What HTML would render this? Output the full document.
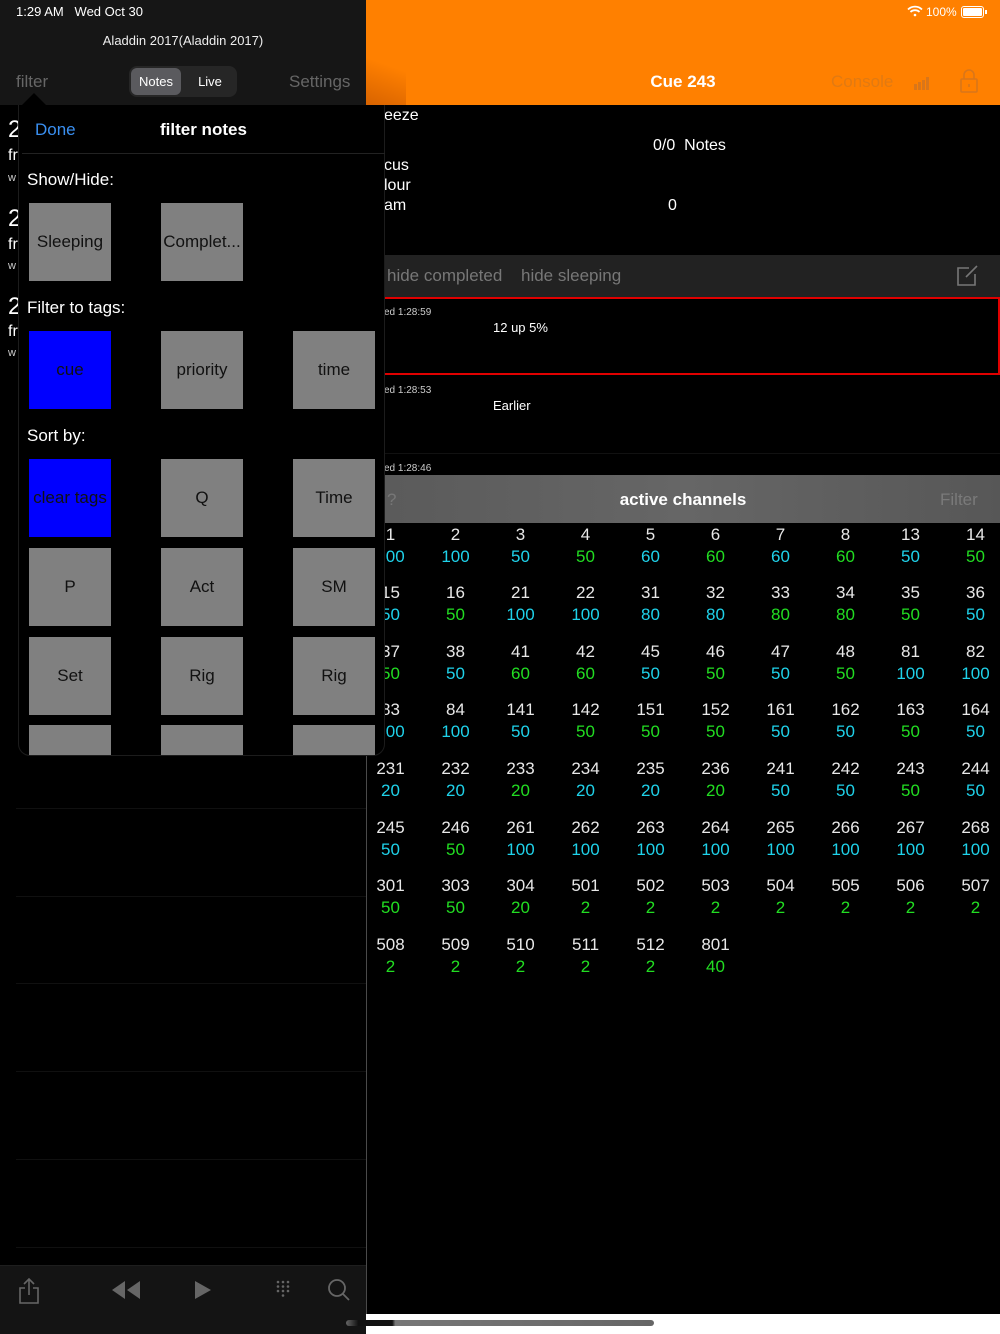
<!DOCTYPE html>
<html><head><meta charset="utf-8"><style>
*{margin:0;padding:0;box-sizing:border-box}
body{width:1000px;height:1334px;background:#000;font-family:"Liberation Sans",sans-serif;position:relative;overflow:hidden;color:#fff}
.a{position:absolute}
.btn{position:absolute;width:82px;height:78px;background:#808080;color:#111;font-size:17px;display:flex;align-items:center;justify-content:center;white-space:nowrap;overflow:hidden}
.blue{background:#0000ff}
.sep{position:absolute;left:16px;width:350px;height:1px;background:#101010}
.row{position:absolute;left:358px;display:flex}
.c{width:65px;text-align:center;font-size:17px;line-height:22px}
.n{color:#e8e8e8}
.cy{color:#1fd2ea}.gr{color:#22dd22}
</style></head><body>
<div class="a" style="left:0;top:0;width:366px;height:105px;background:#161616"></div>
<div class="a" style="left:16px;top:4px;font-size:13px;color:#fff">1:29 AM &nbsp; Wed Oct 30</div>
<div class="a" style="left:0;width:366px;top:33px;text-align:center;font-size:13px;color:#eee">Aladdin 2017(Aladdin 2017)</div>
<div class="a" style="left:16px;top:72px;font-size:17px;color:#666">filter</div>
<div class="a" style="left:129px;top:66px;width:108px;height:31px;background:#262626;border-radius:8px"></div>
<div class="a" style="left:131px;top:68px;width:50px;height:27px;background:#5a5a5e;border-radius:6px"></div>
<div class="a" style="left:131px;top:74px;width:50px;text-align:center;font-size:13px">Notes</div>
<div class="a" style="left:185px;top:74px;width:50px;text-align:center;font-size:13px">Live</div>
<div class="a" style="left:289px;top:72px;font-size:17px;color:#666">Settings</div>
<div class="a" style="left:8px;top:116px;font-size:24px">2</div>
<div class="a" style="left:8px;top:147px;font-size:16px">fr</div>
<div class="a" style="left:8px;top:172px;font-size:11px;color:#ccc">w</div>
<div class="a" style="left:8px;top:205px;font-size:24px">2</div>
<div class="a" style="left:8px;top:236px;font-size:16px">fr</div>
<div class="a" style="left:8px;top:260px;font-size:11px;color:#ccc">w</div>
<div class="a" style="left:8px;top:293px;font-size:24px">2</div>
<div class="a" style="left:8px;top:323px;font-size:16px">fr</div>
<div class="a" style="left:8px;top:347px;font-size:11px;color:#ccc">w</div>
<div class="sep" style="top:808px"></div><div class="sep" style="top:896px"></div><div class="sep" style="top:983px"></div><div class="sep" style="top:1071px"></div><div class="sep" style="top:1159px"></div><div class="sep" style="top:1247px"></div>
<div class="a" style="left:366px;top:105px;width:1px;height:1209px;background:#4a4a4a"></div>
<div class="a" style="left:0;top:1265px;width:366px;height:69px;background:#141414;border-top:1px solid #1e1e1e"></div>
<svg class="a" style="left:14px;top:1276px" width="30" height="30" viewBox="0 0 30 30" fill="none" stroke="#666" stroke-width="1.6"><path d="M11 12H6v15h18V12h-5M15 3v16M10 8l5-5 5 5"/></svg>
<svg class="a" style="left:110px;top:1280px" width="32" height="20" viewBox="0 0 32 20" fill="#666"><path d="M15 1L2 10l13 9zM30 1L17 10l13 9z"/></svg>
<svg class="a" style="left:194px;top:1280px" width="18" height="20" viewBox="0 0 18 20" fill="#666"><path d="M1 1l16 9-16 9z"/></svg>
<svg class="a" style="left:276px;top:1280px" width="14" height="20" viewBox="0 0 14 20" fill="#666"><circle cx="2" cy="2" r="1.3"/><circle cx="7" cy="2" r="1.3"/><circle cx="12" cy="2" r="1.3"/><circle cx="2" cy="6.5" r="1.3"/><circle cx="7" cy="6.5" r="1.3"/><circle cx="12" cy="6.5" r="1.3"/><circle cx="2" cy="11" r="1.3"/><circle cx="7" cy="11" r="1.3"/><circle cx="12" cy="11" r="1.3"/><circle cx="7" cy="15.5" r="1.3"/></svg>
<svg class="a" style="left:327px;top:1278px" width="24" height="24" viewBox="0 0 24 24" fill="none" stroke="#666" stroke-width="1.8"><circle cx="10" cy="10" r="8"/><path d="M16 16l6 6"/></svg>
<div class="a" style="left:366px;top:0;width:634px;height:105px;background:#ff8000"></div>
<div class="a" style="left:366px;top:40px;width:40px;height:65px;background:linear-gradient(20deg,rgba(190,80,0,.6),rgba(255,128,0,0) 60%)"></div>
<svg class="a" style="left:907px;top:5px" width="16" height="12" viewBox="0 0 16 12" fill="none" stroke="#fff" stroke-width="1.8"><path d="M1 4.5a10 10 0 0 1 14 0M3.5 7a6.5 6.5 0 0 1 9 0"/><circle cx="8" cy="10" r="1.3" fill="#fff" stroke="none"/></svg>
<div class="a" style="left:926px;top:5px;font-size:12px">100%</div>
<div class="a" style="left:961px;top:6px;width:23px;height:12px;border:1px solid #fff;border-radius:3px;padding:1px"><div style="width:100%;height:100%;background:#fff;border-radius:1px"></div></div>
<div class="a" style="left:985px;top:10px;width:2px;height:4px;background:#fff"></div>
<div class="a" style="left:366px;width:634px;top:72px;text-align:center;font-size:17px;font-weight:bold">Cue 243</div>
<div class="a" style="left:831px;top:72px;font-size:17px;color:#e17a12">Console</div>
<svg class="a" style="left:913px;top:74px" width="18" height="16" viewBox="0 0 18 16" fill="#d9761a"><rect x="1" y="10" width="3" height="6"/><rect x="5" y="8" width="3" height="8"/><rect x="9" y="6" width="3" height="10"/><rect x="13" y="3" width="3" height="13"/></svg>
<svg class="a" style="left:959px;top:69px" width="20" height="24" viewBox="0 0 20 24" fill="none" stroke="#d9761a" stroke-width="1.6"><rect x="2" y="10" width="16" height="13" rx="1"/><path d="M5 10V6a5 5 0 0 1 10 0v4"/><path d="M10 15v3"/></svg>
<div class="a" style="left:384px;top:107px;font-size:16px">eeze</div>
<div class="a" style="left:384px;top:157px;font-size:16px">cus</div>
<div class="a" style="left:384px;top:177px;font-size:16px">lour</div>
<div class="a" style="left:384px;top:197px;font-size:16px">am</div>
<div class="a" style="left:653px;top:137px;font-size:16px">0/0&nbsp; Notes</div>
<div class="a" style="left:668px;top:197px;font-size:16px">0</div>
<div class="a" style="left:366px;top:255px;width:634px;height:42px;background:#222"></div>
<div class="a" style="left:387px;top:266px;font-size:17px;color:#777">hide completed</div>
<div class="a" style="left:521px;top:266px;font-size:17px;color:#777">hide sleeping</div>
<svg class="a" style="left:955px;top:264px" width="24" height="24" viewBox="0 0 24 24" fill="none" stroke="#777" stroke-width="1.6"><path d="M14 4H3v17h17V10"/><path d="M22 2L11 13"/></svg>
<div class="a" style="left:366px;top:297px;width:634px;height:78px;border:2px solid #e00000"></div>
<div class="a" style="left:384px;top:307px;font-size:10px;color:#ccc">ed 1:28:59</div>
<div class="a" style="left:493px;top:320px;font-size:13px">12 up 5%</div>
<div class="a" style="left:384px;top:385px;font-size:10px;color:#ccc">ed 1:28:53</div>
<div class="a" style="left:493px;top:398px;font-size:13px">Earlier</div>
<div class="a" style="left:366px;top:453px;width:634px;height:1px;background:#111"></div>
<div class="a" style="left:384px;top:463px;font-size:10px;color:#ccc">ed 1:28:46</div>
<div class="a" style="left:366px;top:475px;width:634px;height:48px;background:linear-gradient(90deg,#5a5a5a,#666 50%,#575757)"></div>
<div class="a" style="left:387px;top:490px;font-size:17px;color:#777">?</div>
<div class="a" style="left:366px;width:634px;top:490px;text-align:center;font-size:17px;font-weight:bold">active channels</div>
<div class="a" style="left:940px;top:490px;font-size:17px;color:#7a7a7a">Filter</div>
<div class="row" style="top:524px"><div class="c"><div class="n">1</div><div class="cy">100</div></div><div class="c"><div class="n">2</div><div class="cy">100</div></div><div class="c"><div class="n">3</div><div class="cy">50</div></div><div class="c"><div class="n">4</div><div class="gr">50</div></div><div class="c"><div class="n">5</div><div class="cy">60</div></div><div class="c"><div class="n">6</div><div class="gr">60</div></div><div class="c"><div class="n">7</div><div class="cy">60</div></div><div class="c"><div class="n">8</div><div class="gr">60</div></div><div class="c"><div class="n">13</div><div class="cy">50</div></div><div class="c"><div class="n">14</div><div class="gr">50</div></div></div>
<div class="row" style="top:582px"><div class="c"><div class="n">15</div><div class="cy">50</div></div><div class="c"><div class="n">16</div><div class="gr">50</div></div><div class="c"><div class="n">21</div><div class="cy">100</div></div><div class="c"><div class="n">22</div><div class="cy">100</div></div><div class="c"><div class="n">31</div><div class="cy">80</div></div><div class="c"><div class="n">32</div><div class="cy">80</div></div><div class="c"><div class="n">33</div><div class="gr">80</div></div><div class="c"><div class="n">34</div><div class="gr">80</div></div><div class="c"><div class="n">35</div><div class="gr">50</div></div><div class="c"><div class="n">36</div><div class="cy">50</div></div></div>
<div class="row" style="top:641px"><div class="c"><div class="n">37</div><div class="gr">50</div></div><div class="c"><div class="n">38</div><div class="cy">50</div></div><div class="c"><div class="n">41</div><div class="gr">60</div></div><div class="c"><div class="n">42</div><div class="gr">60</div></div><div class="c"><div class="n">45</div><div class="cy">50</div></div><div class="c"><div class="n">46</div><div class="gr">50</div></div><div class="c"><div class="n">47</div><div class="cy">50</div></div><div class="c"><div class="n">48</div><div class="gr">50</div></div><div class="c"><div class="n">81</div><div class="cy">100</div></div><div class="c"><div class="n">82</div><div class="cy">100</div></div></div>
<div class="row" style="top:699px"><div class="c"><div class="n">83</div><div class="cy">100</div></div><div class="c"><div class="n">84</div><div class="cy">100</div></div><div class="c"><div class="n">141</div><div class="cy">50</div></div><div class="c"><div class="n">142</div><div class="gr">50</div></div><div class="c"><div class="n">151</div><div class="gr">50</div></div><div class="c"><div class="n">152</div><div class="gr">50</div></div><div class="c"><div class="n">161</div><div class="cy">50</div></div><div class="c"><div class="n">162</div><div class="cy">50</div></div><div class="c"><div class="n">163</div><div class="gr">50</div></div><div class="c"><div class="n">164</div><div class="cy">50</div></div></div>
<div class="row" style="top:758px"><div class="c"><div class="n">231</div><div class="cy">20</div></div><div class="c"><div class="n">232</div><div class="cy">20</div></div><div class="c"><div class="n">233</div><div class="gr">20</div></div><div class="c"><div class="n">234</div><div class="cy">20</div></div><div class="c"><div class="n">235</div><div class="cy">20</div></div><div class="c"><div class="n">236</div><div class="gr">20</div></div><div class="c"><div class="n">241</div><div class="cy">50</div></div><div class="c"><div class="n">242</div><div class="cy">50</div></div><div class="c"><div class="n">243</div><div class="gr">50</div></div><div class="c"><div class="n">244</div><div class="cy">50</div></div></div>
<div class="row" style="top:817px"><div class="c"><div class="n">245</div><div class="cy">50</div></div><div class="c"><div class="n">246</div><div class="gr">50</div></div><div class="c"><div class="n">261</div><div class="cy">100</div></div><div class="c"><div class="n">262</div><div class="cy">100</div></div><div class="c"><div class="n">263</div><div class="cy">100</div></div><div class="c"><div class="n">264</div><div class="cy">100</div></div><div class="c"><div class="n">265</div><div class="cy">100</div></div><div class="c"><div class="n">266</div><div class="cy">100</div></div><div class="c"><div class="n">267</div><div class="cy">100</div></div><div class="c"><div class="n">268</div><div class="cy">100</div></div></div>
<div class="row" style="top:875px"><div class="c"><div class="n">301</div><div class="gr">50</div></div><div class="c"><div class="n">303</div><div class="gr">50</div></div><div class="c"><div class="n">304</div><div class="gr">20</div></div><div class="c"><div class="n">501</div><div class="gr">2</div></div><div class="c"><div class="n">502</div><div class="gr">2</div></div><div class="c"><div class="n">503</div><div class="gr">2</div></div><div class="c"><div class="n">504</div><div class="gr">2</div></div><div class="c"><div class="n">505</div><div class="gr">2</div></div><div class="c"><div class="n">506</div><div class="gr">2</div></div><div class="c"><div class="n">507</div><div class="gr">2</div></div></div>
<div class="row" style="top:934px"><div class="c"><div class="n">508</div><div class="gr">2</div></div><div class="c"><div class="n">509</div><div class="gr">2</div></div><div class="c"><div class="n">510</div><div class="gr">2</div></div><div class="c"><div class="n">511</div><div class="gr">2</div></div><div class="c"><div class="n">512</div><div class="gr">2</div></div><div class="c"><div class="n">801</div><div class="gr">40</div></div></div>
<div class="a" style="left:366px;top:1314px;width:634px;height:20px;background:#fff"></div>
<div class="a" style="left:346px;top:1320px;width:308px;height:6px;border-radius:3px;background:linear-gradient(90deg,#666 0,#111 4%,#111 15%,#777 16%,#666 100%)"></div>
<div class="a" style="left:18px;top:105px;width:367px;height:651px;background:#000;border:1px solid #1c1c1c;border-top:none;border-radius:0 0 12px 12px"></div>
<div class="a" style="left:22px;top:93px;width:0;height:0;border-left:12px solid transparent;border-right:12px solid transparent;border-bottom:12px solid #000"></div>
<div class="a" style="left:35px;top:120px;font-size:17px;color:#3a8ff0">Done</div>
<div class="a" style="left:160px;top:120px;font-size:17px;font-weight:bold">filter notes</div>
<div class="a" style="left:22px;top:153px;width:363px;height:1px;background:#222"></div>
<div class="a" style="left:27px;top:170px;font-size:17px">Show/Hide:</div>
<div class="btn" style="left:29px;top:203px">Sleeping</div>
<div class="btn" style="left:161px;top:203px">Complet...</div>
<div class="a" style="left:27px;top:298px;font-size:17px">Filter to tags:</div>
<div class="btn blue" style="left:29px;top:331px">cue</div>
<div class="btn" style="left:161px;top:331px">priority</div>
<div class="btn" style="left:293px;top:331px">time</div>
<div class="a" style="left:27px;top:426px;font-size:17px">Sort by:</div>
<div class="btn blue" style="left:29px;top:459px">clear tags</div>
<div class="btn" style="left:161px;top:459px">Q</div>
<div class="btn" style="left:293px;top:459px">Time</div>
<div class="btn" style="left:29px;top:548px">P</div>
<div class="btn" style="left:161px;top:548px">Act</div>
<div class="btn" style="left:293px;top:548px">SM</div>
<div class="btn" style="left:29px;top:637px">Set</div>
<div class="btn" style="left:161px;top:637px">Rig</div>
<div class="btn" style="left:293px;top:637px">Rig</div>
<div class="btn" style="left:29px;top:725px;height:30px"></div>
<div class="btn" style="left:161px;top:725px;height:30px"></div>
<div class="btn" style="left:293px;top:725px;height:30px"></div>
</body></html>
